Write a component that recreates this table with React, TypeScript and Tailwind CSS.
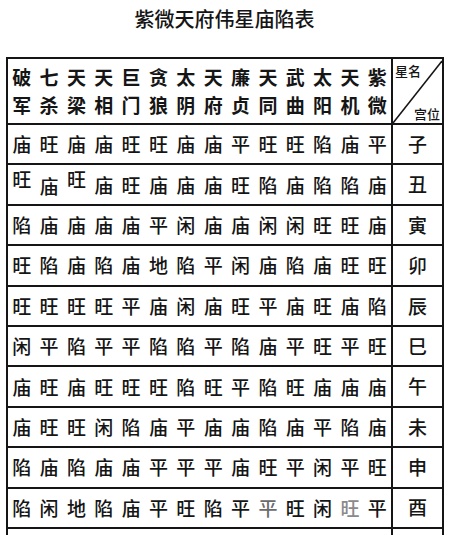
const stars = [
  ['破', '军'], ['七', '杀'], ['天', '梁'], ['天', '相'], ['巨', '门'], ['贪', '狼'], ['太', '阴'],
  ['天', '府'], ['廉', '贞'], ['天', '同'], ['武', '曲'], ['太', '阳'], ['天', '机'], ['紫', '微'],
]

const rows: { palace: string; cells: string }[] = [
  { palace: '子', cells: '庙旺庙庙旺旺庙庙平旺旺陷庙平' },
  { palace: '丑', cells: '旺庙旺庙旺庙庙庙旺陷庙陷陷庙' },
  { palace: '寅', cells: '陷庙庙庙庙平闲庙庙闲闲旺旺庙' },
  { palace: '卯', cells: '旺陷庙陷庙地陷平闲庙陷庙旺旺' },
  { palace: '辰', cells: '旺旺旺旺平庙闲庙旺平庙旺庙陷' },
  { palace: '巳', cells: '闲平陷平平陷陷平陷庙平旺平旺' },
  { palace: '午', cells: '庙旺庙旺旺旺陷旺平陷旺庙庙庙' },
  { palace: '未', cells: '庙旺旺闲陷庙平庙庙陷庙平陷庙' },
  { palace: '申', cells: '陷庙陷庙庙平平平庙旺平闲平旺' },
  { palace: '酉', cells: '陷闲地陷庙平旺陷平平旺闲旺平' },
]

// the scan shifts a few glyphs in the 丑 row
const shift: Record<string, string> = {
  '1-0': '-translate-y-[6px]',
  '1-1': 'translate-y-[1px]',
  '1-2': '-translate-y-[6px]',
}
// faded glyphs in the 酉 row
const faded: Record<string, string> = {
  '9-9': 'text-[#6b6b6b]',
  '9-12': 'text-[#8a8a8a]',
}

export default function App() {
  return (
    <div className="w-[449px] h-[535px] overflow-hidden bg-white text-[#151515] font-['Noto_Sans_CJK_SC','Noto_Sans',sans-serif]">
      <h1 className="pt-[5px] text-center text-[20px] leading-[28px] font-medium">紫微天府伟星庙陷表</h1>

      <div className="mt-[24px] ml-[6px] w-[438px] border-2 border-[#151515]">
        {/* Header */}
        <div className="flex h-[64px]">
          <div className="flex-1 grid grid-cols-14 pt-[4px]">
            {stars.map(([a, b], i) => (
              <div key={i} className="flex flex-col items-center text-[19px] leading-[28px] font-bold">
                <span>{a}</span>
                <span>{b}</span>
              </div>
            ))}
          </div>
          <div className="relative w-[51px] border-l-2 border-[#151515]">
            <svg className="absolute inset-0" width="49" height="64" viewBox="0 0 49 64">
              <line x1="0" y1="64" x2="49" y2="2" stroke="#151515" strokeWidth="1.6" />
            </svg>
            <span className="absolute left-[2px] top-[4px] text-[13px] leading-[15px] font-medium">星名</span>
            <span className="absolute right-[2px] bottom-[2px] text-[13px] leading-[15px] font-medium">宫位</span>
          </div>
        </div>

        {/* Rows */}
        {rows.map((row, r) => (
          <div key={row.palace} className="flex h-[40.4px] border-t-2 border-[#151515]">
            <div className="flex-1 grid grid-cols-14 items-center">
              {Array.from(row.cells).map((c, i) => (
                <span
                  key={i}
                  className={`text-center text-[19px] leading-[24px] font-medium ${shift[`${r}-${i}`] ?? ''} ${faded[`${r}-${i}`] ?? ''}`}
                >
                  {c}
                </span>
              ))}
            </div>
            <div className="w-[51px] border-l-2 border-[#151515] flex items-center justify-center text-[19px] font-medium">
              {row.palace}
            </div>
          </div>
        ))}

        {/* next row, cut off by the page edge */}
        <div className="flex h-[40.4px] border-t-2 border-[#151515]">
          <div className="flex-1" />
          <div className="w-[51px] border-l-2 border-[#151515]" />
        </div>
      </div>
    </div>
  )
}
